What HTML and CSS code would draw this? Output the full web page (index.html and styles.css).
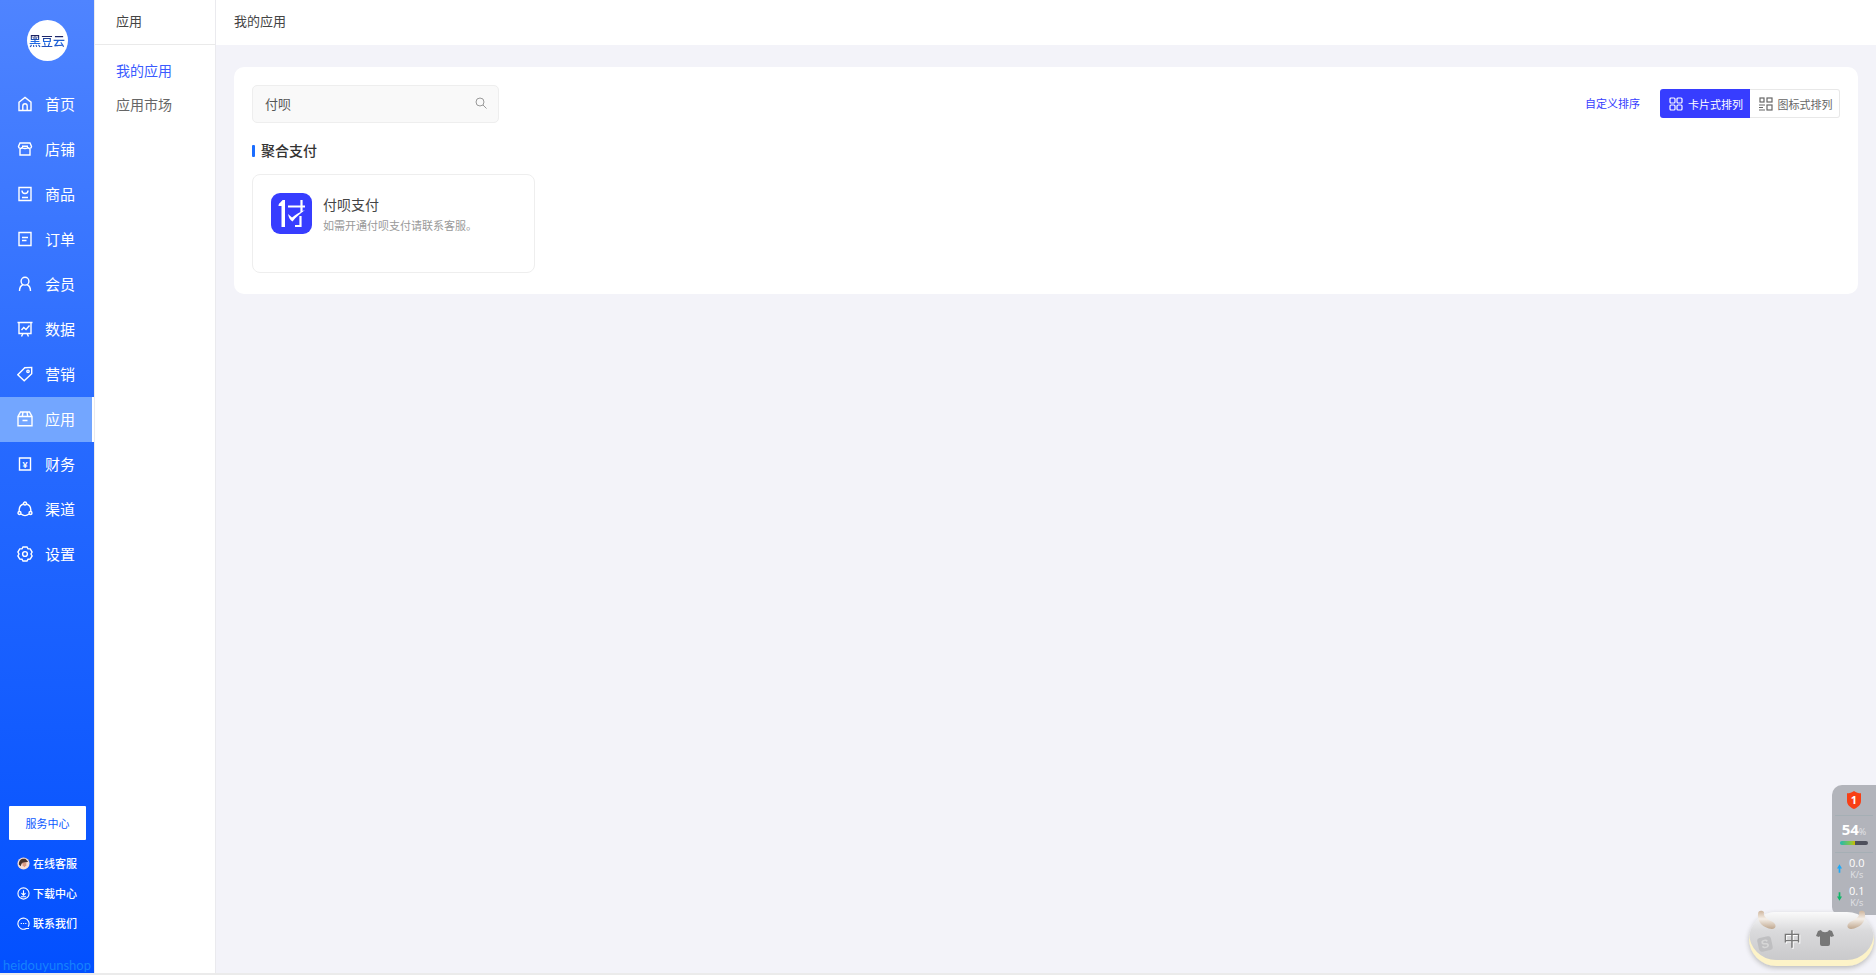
FILE: index.html
```html
<!DOCTYPE html>
<html lang="zh-CN">
<head>
  <meta charset="UTF-8">
  <meta name="viewport" content="width=device-width, initial-scale=1.0">
  <title>我的应用</title>
  <link rel="stylesheet" href="styles.css">
</head>
<body>
  <div class="layout">
    <!-- Main menu -->
    <aside class="sidebar">
      <div class="logo"><span>黑豆云</span></div>
      <nav class="menu">
        <a href="#"><svg viewBox="0 0 16 16"><path d="M2 6.2 8 1.5l6 4.7v8.3H2z"/><path d="M5.8 14.5V10a2.2 2.2 0 0 1 4.4 0v4.5"/></svg>首页</a>
        <a href="#"><svg viewBox="0 0 16 16"><path d="M3 2h10l1.5 3.5c0 2.300-3.200 2.600-3.600.6-.5 1.900-5.300 1.900-5.800 0-.4 2-3.600 1.700-3.600-.6zM3 8v6h10V8M5 5.200h6"/></svg>店铺</a>
        <a href="#"><svg viewBox="0 0 16 16"><path d="M2 1.500h12v13H2zM5 4.500c0 4 6 4 6 0M5 11.500h6"/></svg>商品</a>
        <a href="#"><svg viewBox="0 0 16 16"><path d="M2 1.500h12v13H2zM5 6.500h6M5 9.500h4.500"/></svg>订单</a>
        <a href="#"><svg viewBox="0 0 16 16"><circle cx="8" cy="5.200" r="3.900"/><path d="M2.500 15c0-3.500 1.500-5.500 3.500-6.500M13.500 15c0-3.500-1.500-5.500-3.500-6.500"/></svg>会员</a>
        <a href="#"><svg viewBox="0 0 16 16"><path d="M.5 1.500h15M2 1.500v11h12v-11M6 12.500l-1.500 3M10 12.500l1.500 3M4.500 9l2.300-2.500L9 8.500l3.500-4"/></svg>数据</a>
        <a href="#"><svg viewBox="0 0 16 16"><path d="M.8 8.700 7.800 1.700 14.700 1.400v6.300L7.200 14.800z"/><circle cx="11" cy="5.300" r="1.200"/></svg>营销</a>
        <a href="#" class="active"><svg viewBox="0 0 16 16"><path d="M3.500 1h9L15 5.500v9.200H1V5.500zM1 5.500h14M5.500 9.500h5M6 1l-.7 4.500M10 1l.7 4.500"/></svg>应用</a>
        <a href="#"><svg viewBox="0 0 16 16"><path d="M2.500 2h11v12h-11z"/><text x="8" y="11.500" text-anchor="middle">¥</text></svg>财务</a>
        <a href="#"><svg viewBox="0 0 16 16"><circle cx="8" cy="2.500" r="1.500"/><circle cx="2.500" cy="12" r="1.500"/><circle cx="13.500" cy="12" r="1.500"/><path d="M6.500 3C3.500 3.800 2 7 2.200 10.500M9.500 3c3 .8 4.500 4 4.300 7.500M4 13c2.500 2 5.500 2 8 0"/></svg>渠道</a>
        <a href="#"><svg viewBox="0 0 16 16"><path d="M6 1h4l1 1.800 2.200.1 1.900 3.200L14 8l1.100 1.900-1.900 3.200-2.200.1L10 15H6l-1-1.800-2.200-.1L.9 9.900 2 8 .9 6.100l1.900-3.200L5 2.800z"/><circle cx="8" cy="8" r="2.400"/></svg>设置</a>
      </nav>
      <div class="service">
        <button class="service-btn">服务中心</button>
        <a href="#"><svg viewBox="0 0 14 14" class="avatar"><circle cx="7" cy="7" r="6.500" fill="#f8ded5"/><path d="M2 8C2 3 5 1 9 2l3 3-3 1-4 1-1 3z" fill="#46332f"/><path d="M6 6h4v3L8 11 6 9z" fill="#d99c84"/></svg>在线客服</a>
        <a href="#"><svg viewBox="0 0 14 14"><circle cx="7" cy="7" r="6"/><path d="M7 3.500v5M4.800 6.600 7 8.800l2.200-2.200M4.200 10.500h5.600"/></svg>下载中心</a>
        <a href="#"><svg viewBox="0 0 14 14"><path d="M12 10.500A6 6 0 1 0 10 12.400h3M4 7h1.300M6.400 7h1.300M8.800 7h1.300"/></svg>联系我们</a>
      </div>
      <div class="brand">heidouyunshop</div>
    </aside>

    <!-- Second level menu -->
    <aside class="submenu">
      <h2>应用</h2>
      <nav>
        <a href="#" class="active">我的应用</a>
        <a href="#">应用市场</a>
      </nav>
    </aside>

    <main class="main">
      <header class="topbar">我的应用</header>
      <section class="panel">
        <div class="toolbar">
          <div class="search">
            <input type="text" value="付呗" aria-label="搜索应用">
            <button aria-label="搜索"><svg viewBox="0 0 12 12"><circle cx="5" cy="5" r="4"/><path d="M8 8l3.500 3.500"/></svg></button>
          </div>
          <a href="#" class="sort">自定义排序</a>
          <div class="switch">
            <button class="active"><svg viewBox="0 0 14 14"><rect x="1" y="1" width="5" height="5" rx="1"/><rect x="8" y="1" width="5" height="5" rx="1"/><rect x="1" y="8" width="5" height="5" rx="1"/><rect x="8" y="8" width="5" height="5" rx="1"/></svg>卡片式排列</button>
            <button><svg viewBox="0 0 14 14"><rect x="1" y="1" width="4" height="4"/><rect x="8" y="1" width="5" height="4"/><rect x="8" y="8" width="5" height="5"/><path d="M0 8h6M0 10.500h4M0 13h6"/></svg>图标式排列</button>
          </div>
        </div>

        <h3>聚合支付</h3>
        <div class="apps">
          <article class="app">
            <svg class="app-icon" viewBox="0 0 41 41">
              <rect width="41" height="41" rx="9" fill="#373dff"/>
              <path d="M14 7v27h-3.500V13H7.500C7.500 10 10.500 9 11.500 7z" fill="#fff"/>
              <path d="M17 13.500h17M30.500 7v12M29.500 23v10H24" fill="none" stroke="#fff" stroke-width="2.200"/>
              <path d="M17 21l4 3.500c4-3.500 8-5.500 13-7.500-5 4-9 7-12.500 11.500C19 27 18 25 17 21z" fill="#fff"/>
            </svg>
            <div>
              <h4>付呗支付</h4>
              <p>如需开通付呗支付请联系客服。</p>
            </div>
          </article>
        </div>
      </section>
    </main>
  </div>
  <div class="bottom-line"></div>

  <!-- Desktop monitor widget -->
  <div class="monitor">
    <svg class="shield" viewBox="0 0 14 18"><path d="M7 0c2 1.500 4.500 2.300 7 2.300V10c0 4-3.500 6.500-7 8-3.500-1.500-7-4-7-8V2.300C2.500 2.300 5 1.500 7 0z"/><text x="7" y="13" text-anchor="middle">1</text></svg>
    <div class="usage"><b>54</b>%<div class="meter"></div></div>
    <div class="speed"><svg viewBox="0 0 6 10"><path d="M3 0l3 5H4v5H2V5H0z" fill="#1ba9fa"/></svg><p>0.0<small>K/s</small></p></div>
    <div class="speed"><svg viewBox="0 0 6 10"><path d="M3 10 0 5h2V0h2v5h2z" fill="#0eb668"/></svg><p>0.1<small>K/s</small></p></div>
  </div>

  <!-- Input method bar -->
  <div class="ime">
    <svg class="horn horn-left" viewBox="0 0 20 21"><defs><linearGradient id="horn" x1="0" y1="0" x2="0" y2="1"><stop offset="0" stop-color="#cdb49c"/><stop offset=".45" stop-color="#f5efe8"/><stop offset="1" stop-color="#bfa78f"/></linearGradient></defs><path d="M1 4C1 0 5 0 7 2c-1 5 3 7 9 10 4 3 3 7-1 7C6 18 0 12 1 4z"/></svg>
    <svg class="horn horn-right" viewBox="0 0 20 21"><path d="M19 4c0-4-4-4-6-2 1 5-3 7-9 10-4 3-3 7 1 7 9-1 15-7 14-15z"/></svg>
    <span class="ime-logo">S</span>
    <span class="ime-lang">中</span>
    <svg class="shirt" viewBox="0 0 18 16"><path d="M5 0c1 3 7 3 8 0l3 1 2 5-3 1-1-1v8q0 2-2 2H6q-2 0-2-2V6L3 7 0 6l2-5z"/></svg>
  </div>
</body>
</html>
```
FILE: styles.css
```css
* {
  box-sizing: border-box;
}
body {
  margin: 0;
  min-height: 100vh;
  display: flex;
  flex-direction: column;
  background: #f3f3f9;
  color: #444;
  font-family: "Noto Sans CJK SC", sans-serif;
  font-size: 13px;
}
h2, h3, h4, p {
  margin: 0;
  font-weight: normal;
}
a {
  color: inherit;
  text-decoration: none;
}
button, input {
  font-family: inherit;
  border: 0;
  padding: 0;
}
svg {
  flex: none;
}
.layout {
  flex: 1;
  display: flex;
}
.bottom-line {
  height: 2px;
  background: #ebebeb;
}

/* sidebar */
.sidebar {
  width: 94px;
  display: flex;
  flex-direction: column;
  background: linear-gradient(#4f84ff, #276aff 45%, #0250ff);
  color: #fff;
}
.logo {
  width: 41px;
  height: 41px;
  margin: 20px auto 20px;
  border-radius: 50%;
  background: #fff;
  display: flex;
  align-items: center;
  justify-content: center;
  font-size: 12px;
  font-weight: 500;
  white-space: nowrap;
}
.logo span {
  background: linear-gradient(#1d2261 25%, #1e72f5 60%, #203c9c);
  background-clip: text;
  -webkit-background-clip: text;
  color: transparent;
}
.menu {
  padding-top: 1px;
}
.menu a {
  display: flex;
  align-items: center;
  gap: 12px;
  height: 45px;
  padding: 0 0 1px 17px;
  font-size: 15px;
  line-height: 20px;
}
.menu a.active {
  background: #73a6ff;
  border-right: 2px solid #fff;
}
.menu svg {
  width: 16px;
  height: 16px;
  fill: none;
  stroke: #fff;
  stroke-width: 1.4;
}
.menu text {
  fill: #fff;
  stroke: none;
  font: bold 9px "Liberation Sans", sans-serif;
}
.service {
  margin-top: auto;
  padding: 0 8px 0 9px;
}
.service-btn {
  width: 100%;
  height: 34px;
  margin-bottom: 8px;
  padding-bottom: 1px;
  border-radius: 1px;
  background: #fff;
  color: #0b57ff;
  font-size: 11px;
}
.service a {
  display: flex;
  align-items: center;
  gap: 3px;
  height: 30px;
  padding-left: 8px;
  font-size: 11px;
  font-weight: 500;
}
.service svg {
  width: 13px;
  height: 13px;
  fill: none;
  stroke: #fff;
  stroke-width: 1.2;
}
.service .avatar {
  stroke: none;
}
.brand {
  margin-top: 19px;
  text-align: center;
  color: #1682fc;
  font: 13px/16px "Lato", sans-serif;
}

/* second menu */
.submenu {
  width: 122px;
  border-left: 1px solid #eaeaee;
  border-right: 1px solid #eaeaee;
  background: #fff;
}
.submenu h2 {
  height: 45px;
  padding-left: 21px;
  border-bottom: 1px solid #eaeaea;
  font-size: 13px;
  line-height: 42px;
}
.submenu nav {
  padding-top: 8px;
}
.submenu a {
  display: block;
  padding-left: 21px;
  color: #666;
  font-size: 14px;
  line-height: 34px;
}
.submenu a.active {
  color: #3a5bff;
}

/* content */
.main {
  flex: 1;
}
.topbar {
  height: 45px;
  padding-left: 18px;
  background: #fff;
  line-height: 42px;
}
.panel {
  margin: 22px 18px;
  padding: 18px 18px 21px;
  border-radius: 10px;
  background: #fff;
}
.toolbar {
  display: flex;
  align-items: center;
}
.search {
  display: flex;
  align-items: center;
  width: 247px;
  height: 38px;
  margin-right: auto;
  padding: 0 11px 2px 12px;
  border: 1px solid #eee;
  border-radius: 5px;
  background: #f9f9f9;
}
.search input {
  flex: 1;
  min-width: 0;
  background: none;
  color: #555;
  font-size: 13px;
  outline: none;
}
.search button {
  display: flex;
  background: none;
}
.search svg {
  width: 12px;
  height: 12px;
  fill: none;
  stroke: #999;
}
.sort {
  margin-right: 20px;
  padding-bottom: 2px;
  color: #373dff;
  font-size: 11px;
}
.switch {
  display: flex;
  height: 29px;
  margin-bottom: 1px;
}
.switch button {
  display: flex;
  align-items: center;
  justify-content: center;
  gap: 5px;
  width: 90px;
  padding-left: 2px;
  border: 1px solid #e8e8e8;
  border-left: 0;
  border-radius: 0 3px 3px 0;
  background: #fff;
  color: #666;
  font-size: 11px;
}
.switch button.active {
  border: 0;
  border-radius: 3px 0 0 3px;
  background: #373dff;
  color: #fff;
}
.switch svg {
  width: 14px;
  height: 14px;
  fill: none;
  stroke: currentColor;
  stroke-width: 1.2;
}
.panel h3 {
  display: flex;
  align-items: center;
  gap: 6px;
  margin: 17px 0 14px;
  color: #333;
  font-size: 14px;
  font-weight: 500;
  line-height: 20px;
}
.panel h3::before {
  content: "";
  width: 3px;
  height: 12px;
  margin-top: 2px;
  border-radius: 1px;
  background: #1b6dff;
}
.app {
  display: flex;
  gap: 11px;
  width: 283px;
  height: 99px;
  padding: 18px;
  border: 1px solid #eee;
  border-radius: 8px;
}
.app-icon {
  width: 41px;
  height: 41px;
}
.app h4 {
  font-size: 14px;
  line-height: 22px;
}
.app p {
  color: #999;
  font-size: 11px;
  line-height: 20px;
}

/* floating desktop widgets */
.monitor {
  position: fixed;
  right: 0;
  bottom: 60px;
  width: 44px;
  height: 130px;
  padding-top: 6px;
  border-radius: 10px 0 0 8px;
  background: #b2b4bb;
  color: #fff;
  text-align: center;
  font-family: "Open Sans", sans-serif;
}
.shield {
  display: block;
  width: 14px;
  height: 18px;
  margin: 0 auto;
  fill: #f83f15;
}
.shield text {
  fill: #fff;
  font: bold 11px "Open Sans", sans-serif;
}
.usage {
  margin: 6px 3px 0;
  padding: 4px 5px 7px;
  border-top: 1px solid #a5afb5;
  border-bottom: 1px solid #a5afb5;
  color: #e1e2e6;
  font-size: 9px;
  line-height: 18px;
  white-space: nowrap;
}
.usage b {
  color: #fff;
  font-size: 15px;
}
.meter {
  height: 4px;
  border-radius: 2px;
  background: linear-gradient(90deg, #22b8b0, #8ac840 40%, #d0b800 54%, #4e505c 54%);
}
.speed {
  display: flex;
  align-items: center;
  gap: 7px;
  height: 28px;
  padding: 2px 0 0 5px;
}
.speed svg {
  width: 5px;
  height: 9px;
}
.speed p {
  font-size: 11px;
  line-height: 12px;
}
.speed small {
  display: block;
  color: #e1e2e6;
  font-size: 9px;
  line-height: 11px;
}
.ime {
  position: fixed;
  right: 2px;
  bottom: 9px;
  display: flex;
  align-items: center;
  gap: 11px;
  width: 125px;
  height: 54px;
  padding: 0 9px 2px;
  border-radius: 27px;
  background: linear-gradient(#fafafa, #dadadc 35%, #c6c6c8);
  box-shadow: inset 0 -6px #fdf3c8, 0 2px 5px #bbb;
}
.horn {
  position: absolute;
  top: -2px;
  width: 20px;
  height: 21px;
  fill: url(#horn);
}
.horn-left {
  left: 8px;
}
.horn-right {
  right: 8px;
}
.ime-logo {
  width: 14px;
  margin-top: 12px;
  border-radius: 3px;
  background: #bfbfc1;
  color: #d6d6d6;
  font: bold 12px/14px "Liberation Sans", sans-serif;
  text-align: center;
  transform: rotate(-12deg);
}
.ime-lang {
  color: #777;
  font-size: 18px;
  text-shadow: 1px 1px #fff;
}
.shirt {
  width: 18px;
  height: 16px;
  margin-left: 4px;
  fill: #777;
}
```
